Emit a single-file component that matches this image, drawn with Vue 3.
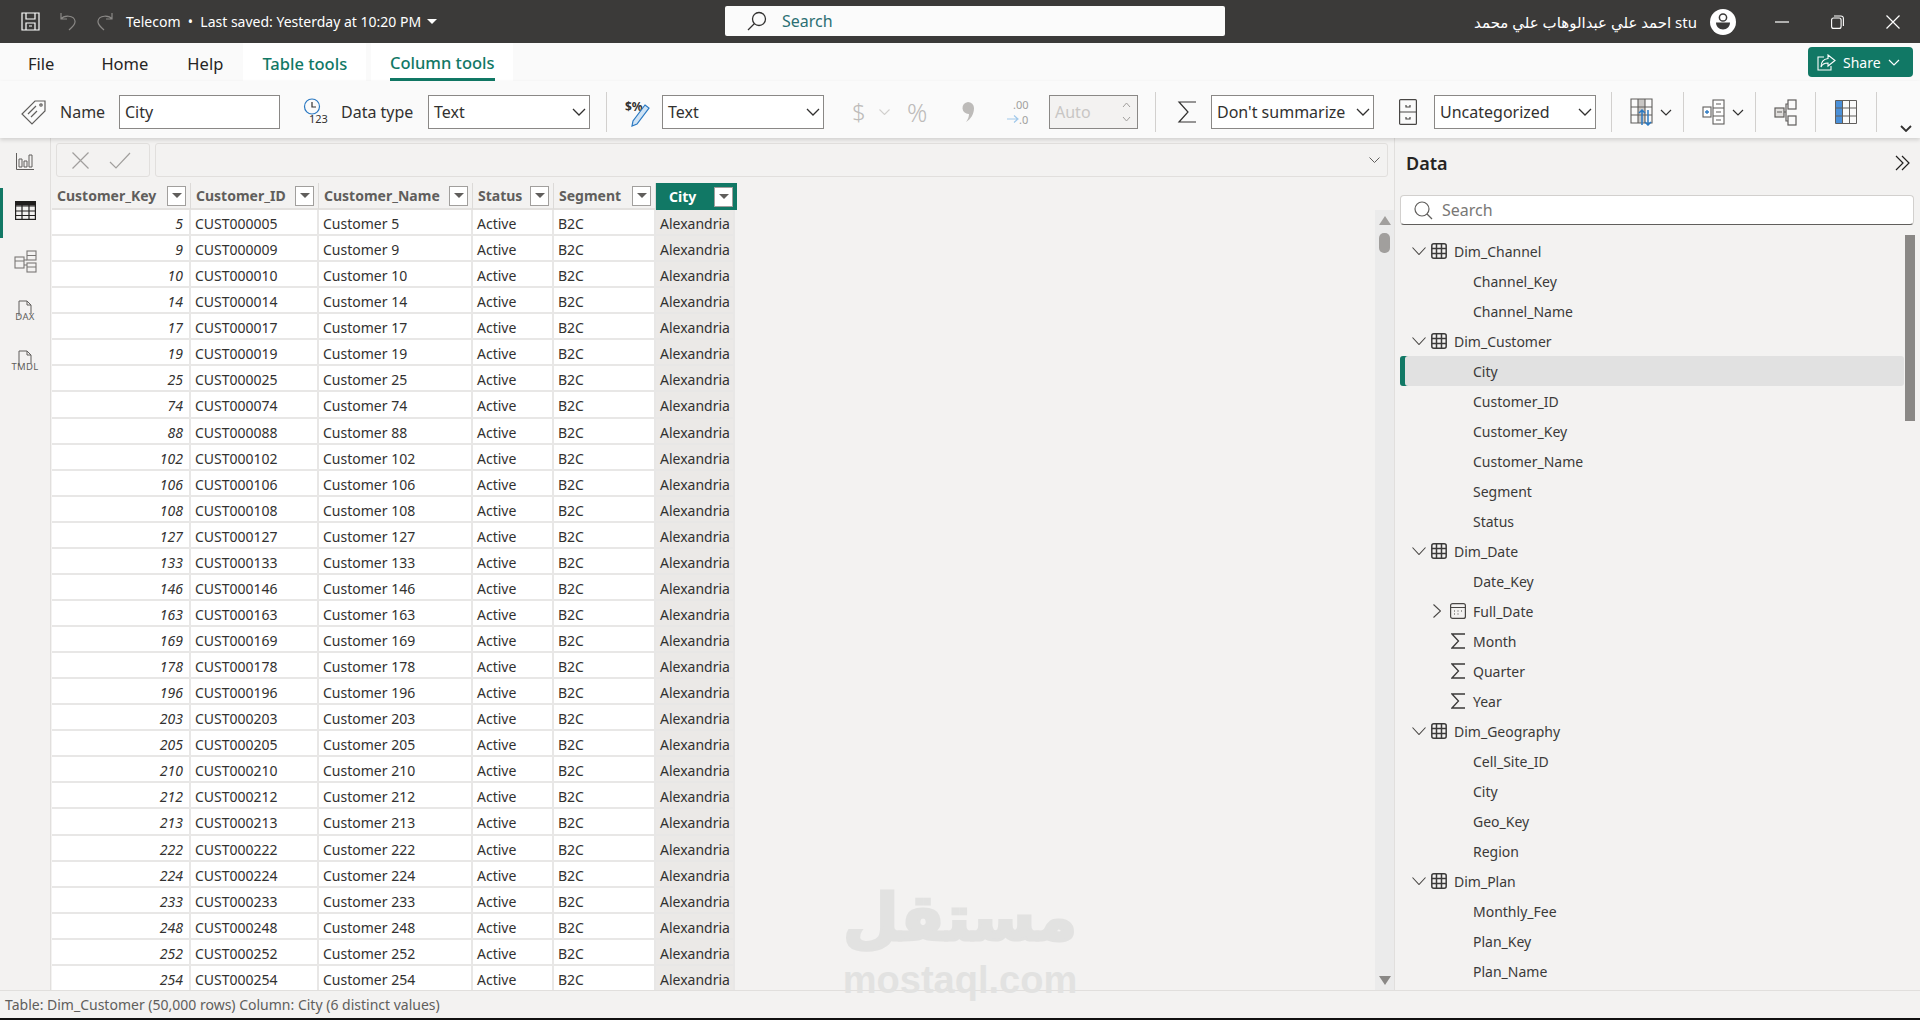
<script setup>
const keys = [5, 9, 10, 14, 17, 19, 25, 74, 88, 102, 106, 108, 127, 133, 146, 163, 169, 178, 196, 203, 205, 210, 212, 213, 222, 224, 233, 248, 252, 254]
const rows = keys.map(k => ({
  key: k,
  id: 'CUST' + String(k).padStart(6, '0'),
  name: 'Customer ' + k
}))
const columns = ['Customer_Key', 'Customer_ID', 'Customer_Name', 'Status', 'Segment', 'City']

const tree = [
  { label: 'Dim_Channel', type: 'table' },
  { label: 'Channel_Key' },
  { label: 'Channel_Name' },
  { label: 'Dim_Customer', type: 'table' },
  { label: 'City', selected: true },
  { label: 'Customer_ID' },
  { label: 'Customer_Key' },
  { label: 'Customer_Name' },
  { label: 'Segment' },
  { label: 'Status' },
  { label: 'Dim_Date', type: 'table' },
  { label: 'Date_Key' },
  { label: 'Full_Date', type: 'date' },
  { label: 'Month', type: 'sum' },
  { label: 'Quarter', type: 'sum' },
  { label: 'Year', type: 'sum' },
  { label: 'Dim_Geography', type: 'table' },
  { label: 'Cell_Site_ID' },
  { label: 'City' },
  { label: 'Geo_Key' },
  { label: 'Region' },
  { label: 'Dim_Plan', type: 'table' },
  { label: 'Monthly_Fee' },
  { label: 'Plan_Key' },
  { label: 'Plan_Name' }
]
</script>

<template>
  <div class="app">
    <header class="titlebar">
      <div class="tb-left">
        <svg class="save" width="19" height="19" viewBox="0 0 19 19" fill="none" stroke="#fff" stroke-width="1.2"><path d="M1 1h17v17H1zM5 1v6h9V1M5 18v-7h9v7M8 14h3"/></svg>
        <svg class="undo" width="16" height="19" viewBox="0 0 16 19" fill="none" stroke="#8a8886" stroke-width="1.2"><path d="M1 1v6h6M1 7c3-4 13-4 14 2 .5 4-3 6-6 9"/></svg>
        <svg class="redo" width="17" height="19" viewBox="0 0 17 19" fill="none" stroke="#8a8886" stroke-width="1.2"><path d="M16 1v6h-6M16 7C13 3 3 3 2 9c-.5 4 3 6 6 9"/></svg>
        <span class="doc">Telecom&nbsp; •&nbsp; Last saved: Yesterday at 10:20 PM</span>
        <span class="caret"></span>
      </div>
      <div class="tb-search">
        <svg width="20" height="20" viewBox="0 0 20 20" fill="none" stroke="#323130" stroke-width="1.3"><circle cx="12" cy="8" r="6.5"/><path d="M7.5 12.5 1 19"/></svg>
        <span>Search</span>
      </div>
      <div class="tb-right">
        <span class="user">احمد علي عبدالوهاب علي محمد stu</span>
        <svg class="avatar" width="26" height="26" viewBox="0 0 26 26"><circle cx="13" cy="13" r="13" fill="#fff"/><circle cx="13" cy="8.5" r="3.6" fill="none" stroke="#3b3a39" stroke-width="1.5"/><path d="M6 13.5h14c0 4-3 7-7 7s-7-3-7-7z" fill="#3b3a39"/></svg>
        <svg class="win-min" width="14" height="2" viewBox="0 0 14 2"><path d="M0 1h14" stroke="#fff" stroke-width="1.2"/></svg>
        <svg class="win-max" width="13" height="14" viewBox="0 0 13 14" fill="none" stroke="#fff" stroke-width="1.1"><rect x=".6" y="3" width="9.5" height="10.4" rx="2"/><path d="M3 1h7a2.4 2.4 0 0 1 2.4 2.4V11"/></svg>
        <svg class="win-close" width="14" height="14" viewBox="0 0 14 14" stroke="#fff" stroke-width="1.2"><path d="M.5.5l13 13M13.500.5l-13 13"/></svg>
      </div>
    </header>

    <nav class="tabbar">
      <span class="tab file">File</span>
      <span class="tab home">Home</span>
      <span class="tab help">Help</span>
      <span class="ctx table-tab">Table tools</span>
      <span class="ctx column-tab"><b>Column tools</b></span>
      <button class="share">
        <svg width="19" height="17" viewBox="0 0 19 17" fill="none" stroke="#fff" stroke-width="1.1"><path d="M7 3H1v13h13v-4"/><path d="M11 1l7 5.500-7 5.500V9C7 9 5 10.500 4 13c0-5 3-8 7-8.500z"/></svg>
        <span>Share</span>
        <svg width="12" height="7" viewBox="0 0 12 7" fill="none" stroke="#fff" stroke-width="1.2"><path d="M1 1l5 5 5-5"/></svg>
      </button>
    </nav>

    <section class="ribbon">
      <svg class="ic-tag" width="27" height="27" viewBox="0 0 27 27" fill="none" stroke="#605e5c" stroke-width="1.2"><path d="M15 2h10v10L12 25 2 15z"/><path d="M8 15l8-8M11 18l6-6"/><circle cx="21" cy="6" r="1.200"/></svg>
      <span class="rb-label w59 m13">Name</span>
      <div class="field w161">City</div>

      <svg class="m23" width="25" height="28" viewBox="0 0 25 28" fill="none"><circle cx="9" cy="8.500" r="7.500" stroke="#2b79c2" stroke-width="1.2"/><path d="M9 4v5h4" stroke="#323130" stroke-width="1.2"/><text x="6" y="25" font-size="11" fill="#323130" font-family="Noto Sans">123</text></svg>
      <span class="rb-label w87 m13">Data type</span>
      <div class="field w162 select">Text<svg width="14" height="8" viewBox="0 0 14 8" fill="none" stroke="#323130" stroke-width="1.3"><path d="M1 1l6 6 6-6"/></svg></div>
      <span class="rb-div m16"></span>

      <svg class="m18" width="25" height="30" viewBox="0 0 25 30" fill="none"><text x="0" y="14" font-size="12" font-weight="700" fill="#323130" font-family="Noto Sans">$%</text><path d="M20 8l4 3-12 16-5 2 1-5z" stroke="#2b79c2" stroke-width="1.2" fill="#cfe3f5"/></svg>
      <div class="field w162 select m12">Text<svg width="14" height="8" viewBox="0 0 14 8" fill="none" stroke="#323130" stroke-width="1.3"><path d="M1 1l6 6 6-6"/></svg></div>

      <span class="off dollar m28">$</span>
      <svg class="m14" width="11" height="6" viewBox="0 0 11 6" fill="none" stroke="#d2d0ce" stroke-width="1.1"><path d="M.5.500l5 5 5-5"/></svg>
      <span class="off pct m17">%</span>
      <svg class="m32" width="13" height="22" viewBox="0 0 13 22"><path d="M6 1a6 6 0 0 1 6 6c0 6-3 11-8 14 2-3 3-5 3-8a6 6 0 0 1-1-12z" fill="#bdbbb9"/></svg>
      <svg class="m32" width="23" height="30" viewBox="0 0 23 30" fill="none"><text x="6" y="12" font-size="11" fill="#a19f9d" font-family="Noto Sans">.00</text><text x="12" y="27" font-size="11" fill="#a19f9d" font-family="Noto Sans">.0</text><path d="M0 22h10M7 18.500l4 3.500-4 3.500" stroke="#a0c8ea" stroke-width="1.2"/></svg>
      <div class="field auto m19">
        <span>Auto</span>
        <span class="spin">
          <svg width="9" height="6" viewBox="0 0 9 6" fill="none" stroke="#a19f9d"><path d="M1 5l3.500-4L8 5"/></svg>
          <svg width="9" height="6" viewBox="0 0 9 6" fill="none" stroke="#a19f9d"><path d="M1 1l3.500 4L8 1"/></svg>
        </span>
      </div>
      <span class="rb-div m17"></span>

      <svg class="m21" width="20" height="24" viewBox="0 0 20 24" fill="none" stroke="#323130" stroke-width="1.2"><path d="M19 2H2l9 10-9 10h17"/></svg>
      <div class="field w163 select m14">Don't summarize<svg width="14" height="8" viewBox="0 0 14 8" fill="none" stroke="#323130" stroke-width="1.3"><path d="M1 1l6 6 6-6"/></svg></div>

      <svg class="m25" width="18" height="26" viewBox="0 0 18 26" fill="none" stroke="#484644" stroke-width="1.200"><rect x=".6" y=".6" width="16.800" height="24.800" rx="1"/><path d="M1 13h16M7 6v2h4V6M7 18v2h4v-2"/></svg>
      <div class="field w162 select m17">Uncategorized<svg width="14" height="8" viewBox="0 0 14 8" fill="none" stroke="#323130" stroke-width="1.3"><path d="M1 1l6 6 6-6"/></svg></div>
      <span class="rb-div m15"></span>

      <svg class="m18" width="23" height="28" viewBox="0 0 23 28" fill="none"><path d="M8 1h7v24H8z" fill="#c8c6c4"/><path d="M1 1h21v24H1zM1 9h21M1 17h21M8 1v24M15 1v24" stroke="#605e5c" stroke-width="1.100"/><path d="M12 27V12m-3 3l3-3 3 3M18 12v15m-3-3l3 3 3-3" stroke="#2b79c2" stroke-width="1.500"/></svg>
      <svg class="m7" width="12" height="7" viewBox="0 0 12 7" fill="none" stroke="#323130" stroke-width="1.2"><path d="M1 1l5 5 5-5"/></svg>
      <span class="rb-div m11"></span>

      <svg class="m18" width="23" height="26" viewBox="0 0 23 26" fill="none" stroke="#605e5c" stroke-width="1.100"><rect x="1" y="8" width="8" height="10" fill="#fff"/><rect x="11" y="1" width="11" height="24" fill="#fff"/><path d="M11 9h11M11 17h11M14 5h5M14 13h5M14 21h5"/><path d="M3 13h4M5 11v4" stroke="#2b79c2" stroke-width="1.300"/></svg>
      <svg class="m7" width="12" height="7" viewBox="0 0 12 7" fill="none" stroke="#323130" stroke-width="1.2"><path d="M1 1l5 5 5-5"/></svg>
      <span class="rb-div m11"></span>

      <svg class="m18" width="23" height="27" viewBox="0 0 23 27" fill="none" stroke="#605e5c" stroke-width="1.200"><rect x="1" y="9" width="9" height="9" fill="#e1dfdd"/><rect x="14" y="1" width="8" height="9"/><rect x="14" y="17" width="8" height="9"/><path d="M10 13h2V5h2M12 13v9h2M3 13h5"/></svg>
      <span class="rb-div m18"></span>

      <svg class="m19" width="22" height="24" viewBox="0 0 22 24" fill="none"><rect x=".5" y=".5" width="7" height="23" fill="#4a90d9"/><path d="M.5.500h21v23H.5zM.5 8h21M.5 16h21M7.500.500v23M14.500.500v23" stroke="#605e5c"/></svg>
      <span class="rb-div m19"></span>
      <svg class="rb-more m23" width="12" height="7" viewBox="0 0 12 7" fill="none" stroke="#323130" stroke-width="1.800"><path d="M1 1l5 5 5-5"/></svg>
    </section>

    <main class="body">
      <aside class="rail">
        <span class="rail-item first">
          <svg width="18" height="18" viewBox="0 0 18 18" fill="none" stroke="#605e5c" stroke-width="1"><path d="M.5 1v16.500H18M3 7h3v8H3zM8 9h3v6H8zM13 3h3v12h-3z"/></svg>
        </span>
        <span class="rail-item active">
          <svg width="21" height="19" viewBox="0 0 21 19" fill="none" stroke="#201f1e" stroke-width="1.200"><rect x=".6" y=".6" width="19.800" height="17.800"/><path d="M1 5h19M1 10h19M1 14.500h19M7 1v17M14 1v17"/><path d="M.6.600h19.800v3.400H.6z" fill="#201f1e"/></svg>
        </span>
        <span class="rail-item">
          <svg width="23" height="23" viewBox="0 0 23 23" fill="none" stroke="#797775" stroke-width="1.100"><rect x="1" y="7" width="9" height="11"/><rect x="13" y="1" width="9" height="9"/><rect x="13" y="13" width="9" height="9"/><path d="M1 11h9M13 5.500h9M13 17h9M10 10h3M10 15h3"/></svg>
        </span>
        <span class="rail-item doc-ic">
          <svg width="16" height="16" viewBox="0 0 16 16" fill="none" stroke="#605e5c"><path d="M2 16V1h8l4 4v9M10 1v4h4"/></svg>
          <small>DAX</small>
        </span>
        <span class="rail-item doc-ic">
          <svg width="16" height="16" viewBox="0 0 16 16" fill="none" stroke="#605e5c"><path d="M2 16V1h8l4 4v9M10 1v4h4"/></svg>
          <small>TMDL</small>
        </span>
      </aside>

      <div class="center">
        <div class="formula">
          <div class="fx-btns">
            <svg width="17" height="17" viewBox="0 0 17 17" stroke="#a19f9d" stroke-width="1.200"><path d="M.5.500l16 16M16.500.500l-16 16"/></svg>
            <svg width="22" height="17" viewBox="0 0 22 17" fill="none" stroke="#a19f9d" stroke-width="1.200"><path d="M1 10l6 6L21 1"/></svg>
          </div>
          <div class="fx-input">
            <svg width="11" height="6" viewBox="0 0 11 6" fill="none" stroke="#605e5c"><path d="M.5.500l5 5 5-5"/></svg>
          </div>
        </div>

        <div class="grid-area">
          <div class="grid">
            <div class="row head">
              <div v-for="c in columns" :key="c" class="hcell" :class="{ sel: c === 'City' }">
                <span>{{ c }}</span>
                <i class="filter"></i>
              </div>
            </div>
            <div v-for="r in rows" :key="r.key" class="row">
              <div class="cell num">{{ r.key }}</div>
              <div class="cell">{{ r.id }}</div>
              <div class="cell">{{ r.name }}</div>
              <div class="cell">Active</div>
              <div class="cell">B2C</div>
              <div class="cell city">Alexandria</div>
            </div>
          </div>
          <div class="vscroll">
            <i class="arrow up"></i>
            <i class="thumb"></i>
            <i class="arrow down"></i>
          </div>
        </div>
      </div>

      <aside class="panel">
        <div class="panel-head">
          <span>Data</span>
          <svg width="16" height="16" viewBox="0 0 16 16" fill="none" stroke="#201f1e" stroke-width="1.200"><path d="M1 1l7 7-7 7M7 1l7 7-7 7"/></svg>
        </div>
        <div class="panel-search">
          <svg width="19" height="19" viewBox="0 0 19 19" fill="none" stroke="#605e5c" stroke-width="1.200"><circle cx="8" cy="8" r="7"/><path d="M13 13l5 5"/></svg>
          <span>Search</span>
        </div>
        <div class="tree">
          <div v-for="(n, i) in tree" :key="i" class="node" :class="[n.type === 'table' ? 'is-table' : 'is-field', { selected: n.selected }]">
            <template v-if="n.type === 'table'">
              <svg class="twist" width="14" height="8" viewBox="0 0 14 8" fill="none" stroke="#484644" stroke-width="1.100"><path d="M.5.500 7 7.500 13.500.500"/></svg>
              <svg class="tbl" width="16" height="16" viewBox="0 0 16 16" fill="none" stroke="#3b3a39" stroke-width="1.500"><rect x=".8" y=".8" width="14.400" height="14.400" rx="2"/><path d="M1 5.500h14M1 10.500h14M5.500 1v14M10.500 1v14"/></svg>
            </template>
            <template v-else-if="n.type === 'date'">
              <svg class="date-twist" width="8" height="14" viewBox="0 0 8 14" fill="none" stroke="#484644" stroke-width="1.100"><path d="M.5.500l7 6.500-7 6.500"/></svg>
              <svg class="cal" width="16" height="16" viewBox="0 0 16 16" fill="none" stroke="#484644" stroke-width="1.200"><rect x=".6" y=".6" width="14.800" height="14.800" rx="2"/><path d="M1 4.500h14M4 8h1M7.500 8h1M11 8h1M4 11h1M7.500 11h1"/></svg>
            </template>
            <svg v-else-if="n.type === 'sum'" class="sum" width="14" height="16" viewBox="0 0 14 16" fill="none" stroke="#3b3a39" stroke-width="1.300"><path d="M14 1H1l6.500 7L1 15h13"/></svg>
            <span>{{ n.label }}</span>
          </div>
          <i class="tree-scroll"></i>
        </div>
      </aside>
    </main>

    <footer class="status">Table: Dim_Customer (50,000 rows) Column: City (6 distinct values)</footer>

    <div class="watermark">
      <span class="wm-ar">مستقل</span>
      <span class="wm-en">mostaql.com</span>
    </div>
  </div>
</template>

<style>
html, body { margin: 0; background: #f3f2f1; overflow: hidden; }
</style>

<style scoped>
.app {
  position: relative;
  width: 1920px;
  height: 1020px;
  display: flex;
  flex-direction: column;
  overflow: hidden;
  background: #f3f2f1;
  color: #323130;
  font-family: "Noto Sans", "DejaVu Sans", sans-serif;
  border-bottom: 2px solid #111;
  box-sizing: border-box;
}
svg { flex: none; display: block; }

/* title bar */
.titlebar {
  height: 43px;
  flex: none;
  background: #3b3a39;
  color: #fff;
  display: flex;
  align-items: center;
  position: relative;
}
.tb-left { display: flex; align-items: center; padding-left: 21px; }
.undo { margin-left: 20px; }
.redo { margin-left: 20px; }
.doc { margin-left: 13px; font-size: 14px; white-space: nowrap; width: 291px; }
.caret {
  margin-left: 10px;
  border-left: 5px solid transparent;
  border-right: 5px solid transparent;
  border-top: 5px solid #fff;
}
.tb-search {
  position: absolute;
  left: 725px;
  top: 6px;
  width: 500px;
  height: 30px;
  background: #fbfbfb;
  border-radius: 2px;
  display: flex;
  align-items: center;
  gap: 15px;
  padding-left: 22px;
  box-sizing: border-box;
  font-size: 16px;
  color: #2b6f73;
}
.tb-right {
  margin-left: auto;
  display: flex;
  align-items: center;
}
.user { font-size: 15px; white-space: nowrap; direction: ltr; }
.avatar { margin-left: 13px; }
.win-min { margin-left: 39px; }
.win-max { margin-left: 42px; }
.win-close { margin-left: 42px; margin-right: 20px; }

/* tabs */
.tabbar {
  height: 38px;
  flex: none;
  background: #fafafa;
  display: flex;
  align-items: center;
  font-size: 16.500px;
  position: relative;
}
.tab { color: #252423; padding-top: 2px; }
.file { margin-left: 28px; }
.home { margin-left: 47px; }
.help { margin-left: 39px; }
.ctx {
  align-self: stretch;
  background: #fff;
  color: #117865;
  display: flex;
  align-items: center;
  justify-content: center;
  box-sizing: border-box;
  font-weight: 500;
}
.table-tab { margin-left: 20px; width: 123px; padding-top: 2px; }
.column-tab { margin-left: 5px; width: 142px; }
.column-tab b {
  font-weight: 500;
  height: 38px;
  line-height: 39px;
  box-sizing: border-box;
  border-bottom: 3px solid #117865;
}
.share {
  margin-left: auto;
  margin-right: 7px;
  width: 105px;
  height: 30px;
  border: 0;
  border-radius: 4px;
  background: #117865;
  color: #fff;
  font: inherit;
  font-size: 14px;
  display: flex;
  align-items: center;
  padding: 0 0 0 9px;
  gap: 7px;
  box-sizing: border-box;
}

/* ribbon */
.ribbon {
  height: 57px;
  flex: none;
  background: #fafafa;
  display: flex;
  align-items: center;
  padding: 5px 0 0 20px;
  box-sizing: border-box;
  box-shadow: 0 2px 4px rgba(0, 0, 0, .14);
  position: relative;
  z-index: 1;
  font-size: 16px;
}
.rb-label { white-space: nowrap; }
.field {
  height: 34px;
  flex: none;
  box-sizing: border-box;
  border: 1px solid #8a8886;
  background: #fff;
  display: flex;
  align-items: center;
  padding: 0 5px;
  white-space: nowrap;
  overflow: hidden;
}
.select { justify-content: space-between; padding-right: 3px; }
.w59 { width: 46px; margin-right: 13px; }
.w87 { width: 74px; margin-right: 13px; }
.w161 { width: 161px; }
.w162 { width: 162px; }
.w163 { width: 163px; }
.rb-div { width: 1px; height: 40px; background: #d2d0ce; flex: none; }
.rb-more { align-self: flex-end; margin-bottom: 6px; }
.off { color: #bdbbb9; font-size: 24px; line-height: 1; font-weight: 300; }
.dollar { width: 13px; }
.pct { width: 23px; font-size: 25px; }
.auto {
  width: 89px;
  background: #f3f2f1;
  color: #c8c6c4;
  justify-content: space-between;
  padding-right: 6px;
}
.spin { display: flex; flex-direction: column; gap: 8px; }
.m7 { margin-left: 7px; }
.m11 { margin-left: 11px; }
.m12 { margin-left: 12px; }
.m13 { margin-left: 13px; }
.m14 { margin-left: 14px; }
.m15 { margin-left: 15px; }
.m16 { margin-left: 16px; }
.m17 { margin-left: 17px; }
.m18 { margin-left: 18px; }
.m19 { margin-left: 19px; }
.m21 { margin-left: 21px; }
.m23 { margin-left: 23px; }
.m25 { margin-left: 25px; }
.m28 { margin-left: 28px; }
.m32 { margin-left: 32px; }

/* main */
.body { flex: 1; display: flex; min-height: 0; }
.rail {
  width: 51px;
  flex: none;
  box-sizing: border-box;
  border-right: 1px solid #e1dfdd;
  display: flex;
  flex-direction: column;
  align-items: center;
}
.rail-item {
  width: 100%;
  height: 50px;
  flex: none;
  display: flex;
  align-items: flex-start;
  justify-content: center;
  padding-top: 12px;
  box-sizing: border-box;
}
.rail-item.first { padding-top: 14px; }
.rail-item.active {
  box-shadow: inset 3px 0 0 #117865;
  padding-top: 13px;
}
.doc-ic { flex-direction: column; align-items: center; justify-content: flex-start; }
.doc-ic svg { margin-bottom: -5px; }
.doc-ic small { font-size: 9.500px; line-height: 11px; color: #605e5c; letter-spacing: .3px; }

.center { flex: none; width: 1343px; display: flex; flex-direction: column; min-height: 0; }
.formula { height: 45px; flex: none; display: flex; padding: 5px 0 6px 5px; gap: 5px; box-sizing: border-box; }
.fx-btns {
  width: 94px;
  box-sizing: border-box;
  border: 1px solid #e1dfdd;
  border-radius: 3px;
  display: flex;
  align-items: center;
  padding-left: 15px;
  gap: 20px;
}
.fx-input {
  flex: 1;
  border: 1px solid #e1dfdd;
  border-radius: 3px;
  margin-right: 6px;
  display: flex;
  align-items: center;
  justify-content: flex-end;
  padding-right: 7px;
}
.grid-area { flex: 1; display: flex; min-height: 0; }
.grid { width: 1324px; flex: none; padding-left: 1px; box-sizing: border-box; overflow: hidden; }
.row {
  display: grid;
  grid-template-columns: 139px 128px 154px 81px 102px 81px;
  height: 26.070px;
  width: 685px;
}
.head { height: 27px; }
.hcell {
  display: flex;
  align-items: center;
  justify-content: space-between;
  padding: 0 4px 0 5px;
  box-sizing: border-box;
  font-size: 14px;
  font-weight: 700;
  color: #605e5c;
  border-right: 1px solid #dcdad8;
  border-bottom: 2px solid #e3e1df;
}
.hcell.sel { background: #117865; color: #fff; padding-left: 13px; border: 0; }
.filter {
  width: 19px;
  height: 20px;
  flex: none;
  box-sizing: border-box;
  border: 1px solid #a19f9d;
  background: #fff;
  position: relative;
}
.filter::after {
  content: "";
  position: absolute;
  left: 4px;
  top: 6px;
  border-left: 5px solid transparent;
  border-right: 5px solid transparent;
  border-top: 5px solid #605e5c;
}
.cell {
  background: #fff;
  font-size: 14px;
  line-height: 27px;
  padding: 0 4px;
  box-sizing: border-box;
  border-right: 2px solid #e8e7e6;
  border-bottom: 2px solid #e8e7e6;
  color: #323130;
  white-space: nowrap;
  overflow: hidden;
}
.num { text-align: right; font-style: italic; padding-right: 6px; }
.city { background: #ebe9e7; width: 79px; padding-left: 4px; padding-right: 0; }

.vscroll {
  width: 19px;
  flex: none;
  background: #ebebeb;
  margin-top: 27px;
  position: relative;
}
.thumb {
  position: absolute;
  left: 4px;
  top: 23px;
  width: 11px;
  height: 20px;
  border-radius: 5px;
  background: #a19f9d;
}
.arrow {
  position: absolute;
  left: 4px;
  border-left: 6px solid transparent;
  border-right: 6px solid transparent;
}
.arrow.up { top: 6px; border-bottom: 9px solid #a19f9d; }
.arrow.down { bottom: 5px; border-top: 9px solid #8a8886; }

/* data pane */
.panel {
  flex: 1;
  min-width: 0;
  border-left: 1px solid #e1dfdd;
  box-sizing: border-box;
  overflow: hidden;
}
.panel-head {
  height: 57px;
  display: flex;
  align-items: center;
  justify-content: space-between;
  padding: 0 9px 8px 11px;
  box-sizing: border-box;
  font-size: 18px;
  font-weight: 600;
  color: #252423;
}
.panel-search {
  width: 514px;
  height: 30px;
  margin-left: 5px;
  box-sizing: border-box;
  background: #fff;
  border: 1px solid #d2d0ce;
  border-bottom: 1px solid #605e5c;
  border-radius: 4px;
  display: flex;
  align-items: center;
  gap: 9px;
  padding-left: 13px;
  font-size: 16px;
  color: #797775;
}
.tree { position: relative; margin-top: 11px; }
.node {
  height: 30px;
  display: flex;
  align-items: center;
  font-size: 14px;
  color: #3b3a39;
  box-sizing: border-box;
  margin-left: 5px;
  width: 504px;
}
.is-table { padding-left: 12px; }
.is-field { padding-left: 73px; position: relative; }
.twist { margin-right: 5px; }
.tbl { margin-right: 7px; }
.sum { position: absolute; left: 51px; }
.cal { position: absolute; left: 50px; }
.date-twist { position: absolute; left: 33px; }
.selected {
  background: #e1e1e1;
  border-radius: 3px;
  box-shadow: inset 5px 0 0 #117865;
}
.tree-scroll {
  position: absolute;
  left: 510px;
  top: -1px;
  width: 10px;
  height: 186px;
  background: #8a8886;
}

.status {
  height: 28px;
  flex: none;
  border-top: 1px solid #e1dfdd;
  box-sizing: border-box;
  padding-left: 5px;
  display: flex;
  align-items: center;
  font-size: 14px;
  color: #605e5c;
}

.watermark {
  position: absolute;
  left: 845px;
  top: 874px;
  width: 230px;
  display: flex;
  flex-direction: column;
  align-items: center;
  color: #e2e2e1;
  pointer-events: none;
}
.wm-ar {
  font-family: "DejaVu Sans", sans-serif;
  font-weight: 700;
  font-size: 64px;
  line-height: 88px;
  -webkit-text-stroke: 3px #e2e2e1;
}
.wm-en { font-family: "Liberation Sans", sans-serif; font-weight: 700; font-size: 38px; line-height: 36px; }
</style>
